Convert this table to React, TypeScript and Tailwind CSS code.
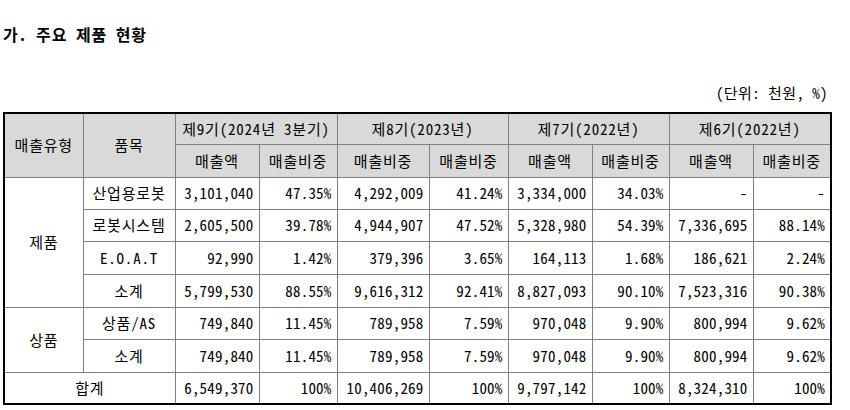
import React from "react";

const periods = ["제9기(2024년 3분기)", "제8기(2023년)", "제7기(2022년)", "제6기(2022년)"];
const sub = ["매출액", "매출비중", "매출비중", "매출비중", "매출액", "매출비중", "매출액", "매출비중"];

type Row = { group?: string; span?: number; item: string; vals: string[]; h: string };

const rows: Row[] = [
  { group: "제품", span: 4, item: "산업용로봇", vals: ["3,101,040", "47.35%", "4,292,009", "41.24%", "3,334,000", "34.03%", "-", "-"], h: "h-[32px]" },
  { item: "로봇시스템", vals: ["2,605,500", "39.78%", "4,944,907", "47.52%", "5,328,980", "54.39%", "7,336,695", "88.14%"], h: "h-[32px]" },
  { item: "E.O.A.T", vals: ["92,990", "1.42%", "379,396", "3.65%", "164,113", "1.68%", "186,621", "2.24%"], h: "h-[33px]" },
  { item: "소계", vals: ["5,799,530", "88.55%", "9,616,312", "92.41%", "8,827,093", "90.10%", "7,523,316", "90.38%"], h: "h-[33px]" },
  { group: "상품", span: 2, item: "상품/AS", vals: ["749,840", "11.45%", "789,958", "7.59%", "970,048", "9.90%", "800,994", "9.62%"], h: "h-[32px]" },
  { item: "소계", vals: ["749,840", "11.45%", "789,958", "7.59%", "970,048", "9.90%", "800,994", "9.62%"], h: "h-[33px]" },
];

const total = ["6,549,370", "100%", "10,406,269", "100%", "9,797,142", "100%", "8,324,310", "100%"];

const widths = [79, 92, 84, 78, 92, 79, 84, 77, 84, 78];

const cell = "border border-[#808080] p-0";
const num = `${cell} text-right pr-[5px] tracking-[0.2px]`;
const ctr = `${cell} text-center tracking-[0.8px]`;
const head = `${cell} text-center bg-[#d9d9d9] font-normal tracking-[0.8px]`;

export default function App() {
  return (
    <div
      className="w-[850px] h-[410px] bg-white text-black overflow-hidden"
      style={{ fontFamily: '"Noto Sans Mono CJK KR", "Noto Sans CJK KR", sans-serif' }}
    >
      <div className="pl-[3px]">
        <div className="pt-[24px] text-[16px] leading-[20px] font-bold tracking-[0.8px]">가. 주요 제품 현황</div>
        <div className="mt-[39px] pr-[22px] text-right text-[15px] leading-[20px] tracking-[0.4px]">(단위: 천원, %)</div>
        <table className="mt-[9px] border-collapse border-2 border-black table-fixed text-[15px] leading-[18px]" style={{ width: 829 }}>
          <colgroup>
            {widths.map((w, i) => (
              <col key={i} style={{ width: w }} />
            ))}
          </colgroup>
          <thead>
            <tr className="h-[31px]">
              <th rowSpan={2} className={head}>매출유형</th>
              <th rowSpan={2} className={head}>품목</th>
              {periods.map((p) => (
                <th key={p} colSpan={2} className={head}>{p}</th>
              ))}
            </tr>
            <tr className="h-[33px]">
              {sub.map((s, i) => (
                <th key={i} className={head}>{s}</th>
              ))}
            </tr>
          </thead>
          <tbody>
            {rows.map((r, i) => (
              <tr key={i} className={r.h}>
                {r.group && (
                  <td rowSpan={r.span} className={ctr}>{r.group}</td>
                )}
                <td className={ctr}>{r.item}</td>
                {r.vals.map((v, j) => (
                  <td key={j} className={num}>{v}</td>
                ))}
              </tr>
            ))}
            <tr className="h-[32px]">
              <td colSpan={2} className={ctr}>합계</td>
              {total.map((v, j) => (
                <td key={j} className={num}>{v}</td>
              ))}
            </tr>
          </tbody>
        </table>
      </div>
    </div>
  );
}
